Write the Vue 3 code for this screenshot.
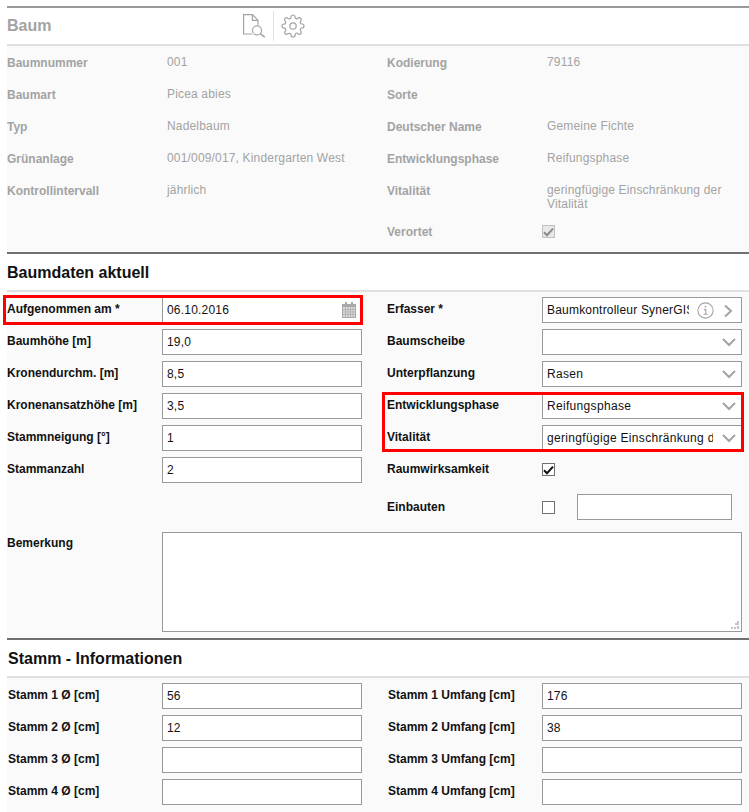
<script setup>
const infoLeft = [
  ['Baumnummer', '001'],
  ['Baumart', 'Picea abies'],
  ['Typ', 'Nadelbaum'],
  ['Grünanlage', '001/009/017, Kindergarten West'],
  ['Kontrollintervall', 'jährlich']
]
const infoRight = [
  ['Kodierung', '79116'],
  ['Sorte', ''],
  ['Deutscher Name', 'Gemeine Fichte'],
  ['Entwicklungsphase', 'Reifungsphase']
]
const leftFields = [
  ['Baumhöhe [m]', '19,0'],
  ['Kronendurchm. [m]', '8,5'],
  ['Kronenansatzhöhe [m]', '3,5'],
  ['Stammneigung [°]', '1'],
  ['Stammanzahl', '2']
]
const stamm = [
  ['Stamm 1 Ø [cm]', '56', 'Stamm 1 Umfang [cm]', '176'],
  ['Stamm 2 Ø [cm]', '12', 'Stamm 2 Umfang [cm]', '38'],
  ['Stamm 3 Ø [cm]', '', 'Stamm 3 Umfang [cm]', ''],
  ['Stamm 4 Ø [cm]', '', 'Stamm 4 Umfang [cm]', '']
]
</script>

<template>
  <div class="page">
    <header class="top">
      <h1 class="title">Baum</h1>
      <div class="tools">
        <svg class="ico-doc" width="24" height="24" viewBox="0 0 24 24" fill="none" stroke="#a3a3a3" stroke-width="1.2">
          <path d="M10 20H1.6V.6h8.8l5.6 5.6v4.6" />
          <path d="M10.4 .8v5.6H16" />
          <circle cx="15" cy="16.4" r="4.5" />
          <path d="M18.2 19.6l4.6 3.6" stroke-width="1.5" />
        </svg>
        <span class="sep"></span>
        <svg class="ico-gear" width="24" height="24" viewBox="0 0 24 24" fill="none" stroke="#a3a3a3" stroke-width="1.2" stroke-linejoin="round">
          <circle cx="12" cy="12" r="3.2" />
          <path d="M19.4 15a1.65 1.65 0 0 0 .33 1.82l.06.06a2 2 0 0 1 0 2.83 2 2 0 0 1-2.83 0l-.06-.06a1.65 1.65 0 0 0-1.82-.33 1.65 1.65 0 0 0-1 1.51V21a2 2 0 0 1-2 2 2 2 0 0 1-2-2v-.09A1.65 1.65 0 0 0 9 19.4a1.65 1.65 0 0 0-1.82.33l-.06.06a2 2 0 0 1-2.83 0 2 2 0 0 1 0-2.83l.06-.06a1.65 1.65 0 0 0 .33-1.82 1.65 1.65 0 0 0-1.51-1H3a2 2 0 0 1-2-2 2 2 0 0 1 2-2h.09A1.65 1.65 0 0 0 4.6 9a1.65 1.65 0 0 0-.33-1.82l-.06-.06a2 2 0 0 1 0-2.83 2 2 0 0 1 2.83 0l.06.06a1.65 1.65 0 0 0 1.82.33H9a1.65 1.65 0 0 0 1-1.51V3a2 2 0 0 1 2-2 2 2 0 0 1 2 2v.09a1.65 1.65 0 0 0 1 1.51 1.65 1.65 0 0 0 1.82-.33l.06-.06a2 2 0 0 1 2.83 0 2 2 0 0 1 0 2.83l-.06.06a1.65 1.65 0 0 0-.33 1.82V9a1.65 1.65 0 0 0 1.51 1H21a2 2 0 0 1 2 2 2 2 0 0 1-2 2h-.09a1.65 1.65 0 0 0-1.51 1z" />
        </svg>
      </div>
    </header>

    <section class="info">
      <div class="col">
        <div v-for="r in infoLeft" :key="r[0]" class="info-row">
          <span class="info-label">{{ r[0] }}</span>
          <span class="info-value">{{ r[1] }}</span>
        </div>
      </div>
      <div class="col">
        <div v-for="r in infoRight" :key="r[0]" class="info-row">
          <span class="info-label">{{ r[0] }}</span>
          <span class="info-value">{{ r[1] }}</span>
        </div>
        <div class="info-row tall">
          <span class="info-label">Vitalität</span>
          <span class="info-value wrap">geringfügige Einschränkung der Vitalität</span>
        </div>
        <div class="info-row">
          <span class="info-label">Verortet</span>
          <span class="check disabled">
            <svg width="11" height="10" viewBox="0 0 11 10"><path d="M1 5.2l3 3L10 1.6" fill="none" stroke="#8a8a8a" stroke-width="2" /></svg>
          </span>
        </div>
      </div>
    </section>

    <h2 class="section-head">Baumdaten aktuell</h2>

    <section class="form">
      <div class="cols">
        <div class="col">
          <div class="field">
            <label>Aufgenommen am *</label>
            <div class="input">
              <span class="txt">06.10.2016</span>
              <svg class="cal" width="14" height="16" viewBox="0 0 14 16">
                <rect x="0.5" y="2.5" width="13" height="13" fill="#dcdcdc" stroke="#a8a8a8" />
                <rect x="1" y="2" width="12" height="3" fill="#a8a8a8" />
                <rect x="3" y="0" width="2" height="3" fill="#a8a8a8" />
                <rect x="9" y="0" width="2" height="3" fill="#a8a8a8" />
                <path d="M3.5 5v10M6 5v10M8.5 5v10M11 5v10M1 7.5h12M1 10h12M1 12.5h12" stroke="#b4b4b4" stroke-width="1" />
              </svg>
            </div>
            <span class="mark mark-date"></span>
          </div>
          <div v-for="f in leftFields" :key="f[0]" class="field">
            <label>{{ f[0] }}</label>
            <div class="input"><span class="txt">{{ f[1] }}</span></div>
          </div>
        </div>

        <div class="col">
          <div class="field">
            <label>Erfasser *</label>
            <div class="input">
              <span class="txt clip">Baumkontrolleur SynerGIS</span>
              <svg class="i-info" width="17" height="17" viewBox="0 0 16 16" fill="none" stroke="#a3a3a3">
                <circle cx="8" cy="8" r="7.2" stroke-width="1" />
                <path d="M6.6 7.2h1.7v4.4M6.4 11.6h3.6" stroke-width="1" />
                <path d="M7.2 4.4h1.4" stroke-width="1.6" />
              </svg>
              <svg class="i-right" width="9" height="14" viewBox="0 0 9 14" fill="none" stroke="#a3a3a3" stroke-width="2"><path d="M1 1.5l6 5.5-6 5.5" /></svg>
            </div>
          </div>
          <div class="field">
            <label>Baumscheibe</label>
            <div class="input select"><span class="txt"></span><svg class="i-down" width="14" height="9" viewBox="0 0 14 9" fill="none" stroke="#a3a3a3" stroke-width="2"><path d="M1 1l6 6 6-6" /></svg></div>
          </div>
          <div class="field">
            <label>Unterpflanzung</label>
            <div class="input select"><span class="txt">Rasen</span><svg class="i-down" width="14" height="9" viewBox="0 0 14 9" fill="none" stroke="#a3a3a3" stroke-width="2"><path d="M1 1l6 6 6-6" /></svg></div>
          </div>
          <div class="field">
            <label>Entwicklungsphase</label>
            <div class="input select"><span class="txt">Reifungsphase</span><svg class="i-down" width="14" height="9" viewBox="0 0 14 9" fill="none" stroke="#a3a3a3" stroke-width="2"><path d="M1 1l6 6 6-6" /></svg></div>
            <span class="mark mark-pair"></span>
          </div>
          <div class="field">
            <label>Vitalität</label>
            <div class="input select"><span class="txt clip2">geringfügige Einschränkung der Vitalität</span><svg class="i-down" width="14" height="9" viewBox="0 0 14 9" fill="none" stroke="#a3a3a3" stroke-width="2"><path d="M1 1l6 6 6-6" /></svg></div>
          </div>
          <div class="field check-row">
            <label>Raumwirksamkeit</label>
            <span class="check">
              <svg width="11" height="10" viewBox="0 0 11 10"><path d="M1 5.2l3 3L10 1.6" fill="none" stroke="#111" stroke-width="2" /></svg>
            </span>
          </div>
          <div class="field einbauten">
            <label>Einbauten</label>
            <span class="check"></span>
            <div class="input short"></div>
          </div>
        </div>
      </div>

      <div class="field remark">
        <label>Bemerkung</label>
        <div class="textarea">
          <svg class="grip" width="9" height="9" viewBox="0 0 9 9" fill="#c4c4c4">
            <rect x="6" y="0" width="2" height="2" /><rect x="4" y="2" width="2" height="2" /><rect x="6" y="2" width="2" height="2" />
            <rect x="0" y="6" width="2" height="2" /><rect x="3" y="6" width="2" height="2" /><rect x="6" y="5" width="2" height="3" />
          </svg>
        </div>
      </div>
    </section>

    <h2 class="section-head second">Stamm - Informationen</h2>

    <section class="form stamm">
      <div v-for="s in stamm" :key="s[0]" class="stamm-row">
        <div class="field">
          <label>{{ s[0] }}</label>
          <div class="input"><span class="txt">{{ s[1] }}</span></div>
        </div>
        <div class="field">
          <label>{{ s[2] }}</label>
          <div class="input"><span class="txt">{{ s[3] }}</span></div>
        </div>
      </div>
    </section>
  </div>
</template>

<style>
html, body { margin: 0; background: #fff; overflow: hidden; }
</style>

<style scoped>
.page {
  width: 742px;
  margin-left: 7px;
  padding-top: 6px;
  font-family: "Liberation Sans", Arial, sans-serif;
  font-size: 12px;
  color: #111;
}
.top {
  display: flex;
  align-items: center;
  height: 36px;
  border-top: 2px solid #999;
  border-bottom: 2px solid #e0e0e0;
  position: relative;
}
.title {
  margin: 0;
  width: 235px;
  font-size: 16px;
  font-weight: 700;
  color: #a3a3a3;
}
.tools { display: flex; align-items: center; height: 30px; }
.ico-doc { margin-right: 7px; }
.sep { width: 1px; height: 30px; background: #e0e0e0; margin-right: 7px; }
.info {
  display: grid;
  grid-template-columns: 380px 362px;
  height: 206px;
  background: #fafafa;
  border-bottom: 2px solid #707070;
  box-sizing: content-box;
}
.info-row {
  display: flex;
  align-items: flex-start;
  height: 32px;
  color: #a3a3a3;
}
.info-row.tall { height: 41px; }
.info-label {
  width: 160px;
  padding-top: 10px;
  font-weight: 700;
  flex: none;
}
.info-value {
  padding-top: 9px;
  letter-spacing: 0.17px;
}
.info-value.wrap { width: 190px; line-height: 14px; padding-top: 9px; }
.check {
  width: 11px;
  height: 11px;
  border: 1px solid #707070;
  background: #fff;
  flex: none;
  display: flex;
  align-items: center;
  justify-content: center;
}
.check.disabled {
  margin-top: 10px;
  margin-left: -5px;
  border-color: #c0c0c0;
  background: #e8e8e8;
}
.section-head {
  margin: 0;
  height: 36px;
  line-height: 37px;
  border-bottom: 2px solid #e0e0e0;
  font-size: 16px;
  font-weight: 700;
  color: #111;
}
.section-head.second { padding-left: 1px; }
.form {
  background: #fafafa;
  border-bottom: 2px solid #707070;
  height: 348px;
  box-sizing: border-box;
}
.cols { display: grid; grid-template-columns: 380px 362px; padding-top: 5px; }
.field {
  display: flex;
  position: relative;
  height: 32px;
}
.field label {
  width: 155px;
  flex: none;
  font-weight: 700;
  padding-top: 5px;
  line-height: 14px;
}
.input {
  width: 200px;
  height: 26px;
  box-sizing: border-box;
  border: 1px solid #999;
  background: #fff;
  display: flex;
  align-items: center;
  padding-left: 4px;
  letter-spacing: 0.2px;
  position: relative;
}
.select { letter-spacing: 0.32px; }
.txt { flex: 1; min-width: 0; white-space: nowrap; overflow: hidden; }
.clip { max-width: 142px; flex: none; }
.clip2 { max-width: 166px; flex: none; }
.cal { position: absolute; right: 5px; top: 4px; }
.i-info { position: absolute; right: 27px; top: 4px; }
.i-right { position: absolute; right: 8px; top: 6px; }
.i-down { position: absolute; right: 5px; top: 8px; }
.check-row { align-items: flex-start; height: 37px; }
.check-row .check { margin-top: 6px; }
.einbauten { height: 38px; }
.einbauten label { padding-top: 6px; }
.einbauten .check { margin-top: 7px; }
.input.short { width: 155px; margin-left: 22px; }
.mark {
  position: absolute;
  z-index: 2;
  border: 3px solid #f00;
  box-sizing: border-box;
  pointer-events: none;
}
.mark-date { left: -4px; top: -2px; width: 360px; height: 30px; }
.mark-pair { left: -5px; top: -1px; width: 362px; height: 60px; }
.remark { height: 106px; }
.remark label { padding-top: 4px; }
.textarea {
  width: 580px;
  height: 100px;
  box-sizing: border-box;
  border: 1px solid #999;
  background: #fff;
  position: relative;
}
.grip { position: absolute; right: 1px; bottom: 1px; }
.stamm { border-bottom: 0; height: 134px; padding-top: 5px; }
.stamm-row { display: grid; grid-template-columns: 380px 362px; }
.stamm-row label { padding-left: 1px; width: 154px; }
</style>
